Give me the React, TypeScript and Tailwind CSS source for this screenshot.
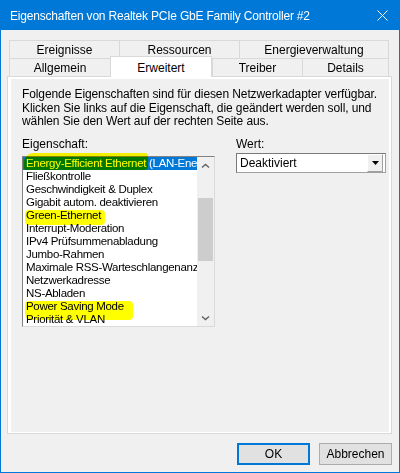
import React from "react";

const items: string[] = [
    "Energy-Efficient Ethernet (LAN-Energiesparmodus)",
    "Fließkontrolle",
    "Geschwindigkeit & Duplex",
    "Gigabit autom. deaktivieren",
    "Green-Ethernet",
    "Interrupt-Moderation",
    "IPv4 Prüfsummenabladung",
    "Jumbo-Rahmen",
    "Maximale RSS-Warteschlangenanzahl",
    "Netzwerkadresse",
    "NS-Abladen",
    "Power Saving Mode",
    "Priorität & VLAN",
];

const Chevron: React.FC<{ down?: boolean }> = ({down}) => (
    <svg width="9" height="6" viewBox="0 0 9 6">
        <path d={down ? "M1 1.5 L4.5 4.5 L8 1.5" : "M1 4.5 L4.5 1.5 L8 4.5"} fill="none" stroke="#606060"
              strokeWidth="1.4"/>
    </svg>
);

const tabBase = "h-[18px] flex items-center justify-center border-t border-l border-[#d9d9d9] bg-[#f0f0f0] text-black";

const App: React.FC = () => {
    return (
        <div
            className="w-[400px] h-[473px] flex flex-col bg-[#f0f0f0] border border-[#0078d7] font-['Liberation_Sans',Arial,sans-serif] text-[12px] text-black overflow-hidden">
            {/* title bar */}
            <div className="h-[29px] shrink-0 bg-[#0078d7] flex items-center justify-between pl-[9px] pr-[11px]">
                <span className="text-white text-[12px] tracking-[-0.2px]">Eigenschaften von Realtek PCIe GbE Family Controller #2</span>
                <svg width="11" height="11" viewBox="0 0 11 11">
                    <path d="M0.5 0.5 L10.5 10.5 M10.5 0.5 L0.5 10.5" stroke="white" strokeWidth="1"/>
                </svg>
            </div>

            {/* tabs */}
            <div className="ml-[8px] mt-[10px] w-[380px] flex flex-col">
                <div className="flex">
                    <div className={tabBase + " w-[110px]"}>Ereignisse</div>
                    <div className={tabBase + " w-[120px]"}>Ressourcen</div>
                    <div className={tabBase + " w-[150px] border-r"}>Energieverwaltung</div>
                </div>
                <div className="flex">
                    <div className={tabBase + " w-[101px]"}>Allgemein</div>
                    <div
                        className="relative z-10 w-[102px] h-[21px] -mt-[2px] -mb-[1px] flex items-start justify-center pt-[2px] bg-white border-t border-l border-r border-[#d9d9d9]">
                        Erweitert
                    </div>
                    <div className={tabBase + " w-[90px]"}>Treiber</div>
                    <div className={tabBase + " w-[87px] border-r"}>Details</div>
                </div>
            </div>

            {/* tab page */}
            <div className="ml-[6px] w-[385px] h-[358px] border border-[#d9d9d9] bg-white pt-[2px] pl-[3px] pr-[2px] pb-[1px] flex">
                <div className="flex-1 bg-[#f0f0f0] pl-[11px] pt-[9px] flex flex-col">
                    <p className="leading-[13.5px] tracking-[-0.1px]">
                        Folgende Eigenschaften sind für diesen Netzwerkadapter verfügbar.<br/>
                        Klicken Sie links auf die Eigenschaft, die geändert werden soll, und<br/>
                        wählen Sie den Wert auf der rechten Seite aus.
                    </p>
                    <div className="mt-[9px] flex gap-[21px]">
                        {/* property list */}
                        <div className="w-[193px] flex flex-col">
                            <span className="leading-[13.5px]">Eigenschaft:</span>
                            <div className="relative mt-[5px]">
                                <div
                                    className="h-[171px] flex bg-white border-t border-l border-[#828282] border-r border-b border-r-[#dadada] border-b-[#dadada] overflow-hidden">
                                    <div className="w-[174px] flex flex-col">
                                        {items.map((item, i) => (
                                            <div key={item}
                                                 className={"h-[13px] leading-[13px] pl-[3px] text-[11.5px] tracking-[-0.3px] whitespace-nowrap overflow-hidden shrink-0 " + (i === 0 ? "bg-[#0078d7] text-white" : "")}>
                                                {item}
                                            </div>
                                        ))}
                                    </div>
                                    <div className="w-[17px] bg-[#f0f0f0] flex flex-col">
                                        <div className="h-[17px] flex items-center justify-center"><Chevron/></div>
                                        <div className="flex-1 px-px pt-[24px]">
                                            <div className="h-[63px] bg-[#cdcdcd]"></div>
                                        </div>
                                        <div className="h-[17px] flex items-center justify-center"><Chevron down/></div>
                                    </div>
                                </div>
                                {/* marker highlights */}
                                <div
                                    className="absolute left-[2px] top-[-3px] w-[124px] h-[17px] bg-[#ffff00] mix-blend-multiply rounded-tl-[9px] rounded-tr-[3px] rounded-br-[4px] rounded-bl-[2px]"></div>
                                <div
                                    className="absolute left-[3px] top-[54px] w-[80px] h-[15px] bg-[#ffff00] mix-blend-multiply rounded-[4px]"></div>
                                <div
                                    className="absolute left-[3px] top-[145px] w-[108px] h-[19px] bg-[#ffff00] mix-blend-multiply rounded-[4px] rounded-bl-[6px]"></div>
                            </div>
                        </div>

                        {/* value */}
                        <div className="w-[150px] flex flex-col">
                            <span className="leading-[13.5px]">Wert:</span>
                            <div
                                className="mt-[1.5px] h-[20px] flex items-stretch bg-white border border-[#a0a0a0] border-t-[#7a7a7a] border-l-[#7a7a7a]">
                                <span className="flex-1 pl-[3px] leading-[18px]">Deaktiviert</span>
                                <div
                                    className="w-[16px] mr-[2px] flex items-center justify-center bg-[#f0f0f0] border border-[#a0a0a0] border-t-white border-l-white">
                                    <svg width="7" height="4" viewBox="0 0 7 4">
                                        <path d="M0 0 L7 0 L3.5 4 Z" fill="black"/>
                                    </svg>
                                </div>
                            </div>
                        </div>
                    </div>
                </div>
            </div>

            {/* buttons */}
            <div className="mt-[9px] pr-[7px] flex justify-end gap-[9px]">
                <button className="w-[73px] h-[22px] bg-[#e1e1e1] border-2 border-[#0078d7] text-[12px]">OK</button>
                <button className="w-[73px] h-[22px] bg-[#e1e1e1] border border-[#adadad] text-[12px]">Abbrechen</button>
            </div>
        </div>
    );
};

export default App;
